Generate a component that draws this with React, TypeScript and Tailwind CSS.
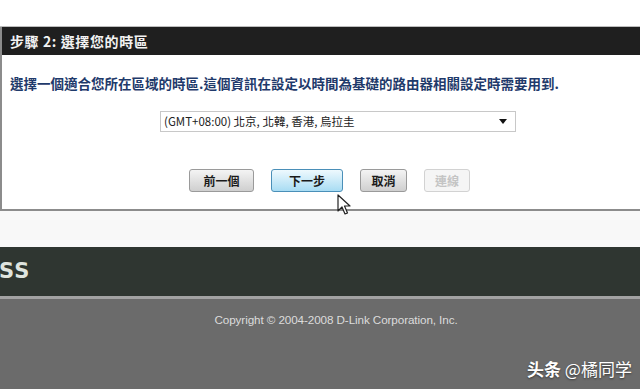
import React from "react";

const CJK = { fontFamily: '"Noto Sans CJK TC", "Noto Sans CJK SC", sans-serif' };

type Kind = "gray" | "blue" | "off";

function Btn({ label, kind, w }: { label: string; kind: Kind; w: string }) {
  const cls =
    kind === "blue"
      ? "border-[#4a8fb8] bg-gradient-to-b from-[#eef9fe] to-[#a8dcf3] text-[#1a1a1a]"
      : kind === "off"
      ? "border-[#d2d2d2] bg-[#f5f5f5] text-[#c4c4c4]"
      : "border-[#9a9a9a] bg-gradient-to-b from-[#f4f4f4] to-[#cfcfcf] text-[#1a1a1a]";
  return (
    <button
      className={`h-[23px] ${w} rounded-[3px] border text-[12px] font-bold leading-none ${cls}`}
      style={CJK}
    >
      {label}
    </button>
  );
}

function Cursor() {
  return (
    <svg className="absolute left-[337px] top-[194px]" width="14" height="22" viewBox="0 0 14 22">
      <path d="M1 1 L1 17 L5 13 L8 20 L10.5 19 L7.5 12 L13 12 Z" fill="#fff" stroke="#222" strokeWidth="1.2" strokeLinejoin="round" />
    </svg>
  );
}

export default function App() {
  return (
    <div className="relative flex h-[389px] w-[640px] flex-col overflow-hidden bg-white" style={CJK}>
      <div className="h-[27px] shrink-0 border-b border-[#bdbdbd] bg-white" />

      {/* wizard panel */}
      <div className="flex h-[184px] w-[673px] shrink-0 flex-col border-b-2 border-l-2 border-[#8c8c8c] bg-white">
        <div className="flex h-[28px] shrink-0 items-center bg-[#1f1f1f] px-[8px] text-[14px] font-bold tracking-[0.6px] text-[#f2f2f2]">
          步驟 2: 選擇您的時區
        </div>
        <p className="pl-[8px] pt-[19px] text-[13.5px] font-bold leading-[18px] text-[#1f3a6b]">
          選擇一個適合您所在區域的時區.這個資訊在設定以時間為基礎的路由器相關設定時需要用到.
        </p>
        <div className="mt-[19px] flex justify-center pl-[1px]">
          <div className="flex h-[21px] w-[356px] items-center justify-between border border-[#c8c8c8] bg-white pl-[3px] pr-[8px] text-[11.5px] text-[#222]">
            <span>(GMT+08:00) 北京, 北韓, 香港, 烏拉圭</span>
            <span className="h-0 w-0 border-x-[4px] border-t-[5px] border-x-transparent border-t-[#111]" />
          </div>
        </div>
        <div className="mt-[37px] flex justify-center gap-[17px] pr-[16px]">
          <Btn label="前一個" kind="gray" w="w-[65px]" />
          <Btn label="下一步" kind="blue" w="w-[72px]" />
          <Btn label="取消" kind="gray" w="w-[47px]" />
          <Btn label="連線" kind="off" w="w-[46px]" />
        </div>
      </div>

      <div className="h-[36px] shrink-0 bg-[#f8f8f8]" />

      {/* footer */}
      <div className="flex h-[49px] shrink-0 items-center bg-[#2f3631]">
        <span className="-ml-[1px] text-[21px] font-bold tracking-[1px] text-[#dfe4df]" style={{ fontFamily: '"DejaVu Sans", sans-serif' }}>
          SS
        </span>
      </div>
      <div className="h-[3px] shrink-0 bg-[#a2a2a2]" />
      <div className="flex-1 bg-[#6b6b6b]">
        <p
          className="w-[672px] pt-[12px] text-center text-[11.7px] tracking-[-0.1px] text-[#dcdcdc]"
          style={{ fontFamily: '"Liberation Sans", sans-serif' }}
        >
          Copyright © 2004-2008 D-Link Corporation, Inc.
        </p>
      </div>

      <div className="absolute left-[527px] top-[356px] text-[17px] font-bold text-white [text-shadow:0_1px_2px_rgba(0,0,0,0.5)]" style={{ fontFamily: '"Noto Sans CJK SC", sans-serif' }}>
        头条 <span className="font-normal">@橘同学</span>
      </div>

      <Cursor />
    </div>
  );
}
